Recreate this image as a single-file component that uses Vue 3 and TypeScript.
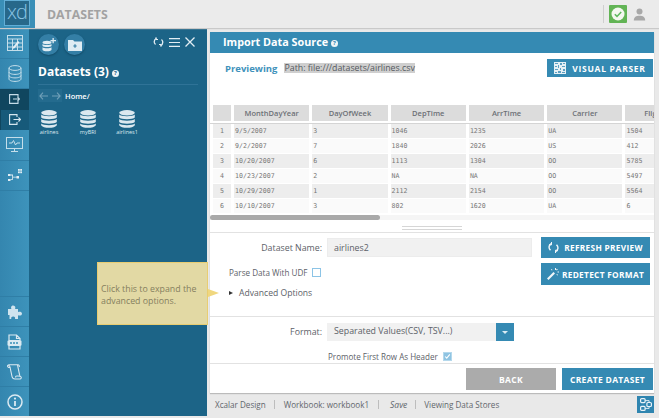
<script setup lang="ts">
const columns = ['MonthDayYear', 'DayOfWeek', 'DepTime', 'ArrTime', 'Carrier', 'FlightNum']
const rows = [
  ['9/5/2007', '3', '1046', '1235', 'UA', '1504'],
  ['9/2/2007', '7', '1840', '2026', 'US', '412'],
  ['10/20/2007', '6', '1113', '1304', 'OO', '5785'],
  ['10/23/2007', '2', 'NA', 'NA', 'OO', '5497'],
  ['10/29/2007', '1', '2112', '2154', 'OO', '5564'],
  ['10/10/2007', '3', '802', '1620', 'UA', '6'],
]
const datasets = ['airlines', 'myBRI', 'airlines1']
</script>

<template>
  <div class="app">
    <header class="topbar">
      <div class="logo"><span>xd</span></div>
      <div class="topbar-title">DATASETS</div>
      <div class="topbar-right">
        <span class="top-divider"></span>
        <span class="status">
          <svg width="14" height="14" viewBox="0 0 14 14">
            <circle cx="7" cy="7" r="6.5" fill="#f4f8f0" />
            <path d="M3.8 7.2l2.2 2.2 4.2-4.4" fill="none" stroke="#5cb85c" stroke-width="1.5" />
          </svg>
        </span>
        <svg class="user" width="13" height="13" viewBox="0 0 13 13">
          <circle cx="6.5" cy="3.6" r="3" fill="#a8a8a8" />
          <path d="M.8 12.5c0-3.6 2.4-4.8 5.7-4.8s5.7 1.2 5.7 4.8z" fill="#a8a8a8" />
        </svg>
      </div>
    </header>

    <div class="body">
      <nav class="sidebar">
        <div class="nav-item">
          <svg width="16" height="16" viewBox="0 0 16 16" fill="none" stroke="#c4deea" stroke-width="1">
            <rect x=".5" y=".5" width="15" height="15" />
            <path d="M.5 4h15M5.5 4v11.5M10.5 4v11.5M.5 8h15M.5 12h15" />
            <path d="M6 12l5-6 1.500 1.200-5 6-2 .6z" fill="#e3eff5" stroke="none" />
          </svg>
        </div>
        <div class="nav-item">
          <svg width="14" height="17" viewBox="0 0 14 17" fill="none" stroke="#c4deea" stroke-width="1">
            <ellipse cx="7" cy="3" rx="6" ry="2.400" />
            <path d="M1 3v11c0 1.400 2.700 2.400 6 2.400s6-1 6-2.400V3M1 7c0 1.400 2.700 2.400 6 2.400S13 8.400 13 7M1 10.500c0 1.400 2.700 2.400 6 2.400s6-1 6-2.400" />
          </svg>
        </div>
        <div class="sub-item sub-in">
          <svg width="11" height="10" viewBox="0 0 11 10" fill="none" stroke="#c4dbe7" stroke-width="1.100">
            <path d="M9 3V.6H.6v8.800H9V7M4 5h6.500M8.500 3l2 2-2 2" />
          </svg>
        </div>
        <div class="sub-item sub-out">
          <svg width="12" height="11" viewBox="0 0 12 11" fill="none" stroke="#d5e6ef" stroke-width="1.100">
            <path d="M8 3V.6H.6v9.800H8V8M4.500 5.500h7M9.500 3.500l2 2-2 2" />
          </svg>
        </div>
        <div class="nav-item">
          <svg width="17" height="16" viewBox="0 0 17 16" fill="none" stroke="#c4deea" stroke-width="1">
            <rect x=".5" y=".5" width="16" height="11" />
            <path d="M3 6h3l1.500-2.500L9.500 8 11 6h3M5 14.500h7M8.500 11.500v3" />
          </svg>
        </div>
        <div class="nav-item">
          <svg width="14" height="13" viewBox="0 0 14 13" fill="#e2eef4" stroke="none">
            <rect x="10" y="0" width="1.800" height="1.800" />
            <rect x="12.200" y="0" width="1.800" height="1.800" />
            <rect x="10" y="2.400" width="1.800" height="1.800" />
            <rect x="12.200" y="2.400" width="1.800" height="1.800" />
            <rect x="0" y="5" width="2.500" height="2" />
            <rect x="0" y="10" width="2.500" height="2" />
            <path d="M2.500 5.600h2.500v5.200H2.500v-.800h1.700V6.400H2.500zM5 7.800h4.500v.800H5z" />
            <rect x="8.500" y="7" width="2.500" height="2.500" />
          </svg>
        </div>
        <div class="nav-spacer"></div>
        <div class="nav-item nav-bottom">
          <svg width="16" height="16" viewBox="0 0 16 16" fill="#cfe3ee">
            <path d="M1 5h3.500c-.800-1.200-.500-3.500 1.700-3.500S8.800 3.800 8 5h3v3.200c1.200-.800 4-.500 4 1.500s-2.800 2.300-4 1.500V15H8c.500-1.200-.200-2.500-1.800-2.500S3.800 13.800 4.300 15H2.500V11H1z" />
          </svg>
        </div>
        <div class="nav-item nav-bottom">
          <svg width="15" height="16" viewBox="0 0 15 16" fill="none" stroke="#dbe9f1" stroke-width="1.200">
            <path d="M2 6V1h7.500L13 4.500V6M2 12v3h11v-3M9.500 1v3.500H13" />
            <rect x=".5" y="6" width="14" height="6" rx="1.500" fill="#dbe9f1" stroke="none" />
            <path d="M3 9h9" stroke="#3a8fb7" stroke-width="1.500" stroke-dasharray="2 1" />
          </svg>
        </div>
        <div class="nav-item nav-bottom">
          <svg width="15" height="16" viewBox="0 0 15 16" fill="none" stroke="#dbe9f1" stroke-width="1.100">
            <path d="M3 3C2.500 1.500 1.500.7.700 1.500.2 2.200 1 3.500 3 3.500" />
            <path d="M1.500.8H11c1 0 1.500 1.200 1.300 2.200" />
            <path d="M3 3l2 9.500c.3 1.500 1.500 2.500 3 2.500h5c1.300 0 1.500-1.500 1-2.200-.5-.8-2-1-4.500-.8-.7 0-1 .5-.7 1.500" />
            <path d="M10.500 1l2.300 10.800" />
          </svg>
        </div>
        <div class="nav-item nav-bottom">
          <svg width="16" height="16" viewBox="0 0 16 16" fill="none" stroke="#dbe9f1" stroke-width="1.500">
            <circle cx="8" cy="8" r="7" />
            <path d="M8 7v5" stroke-width="1.800" />
            <circle cx="8" cy="4.600" r="1.100" fill="#dbe9f1" stroke="none" />
          </svg>
        </div>
      </nav>

      <aside class="panel">
        <div class="panel-top">
          <button class="round-btn" type="button">
            <svg width="14" height="14" viewBox="0 0 14 14" fill="#dfecf3">
              <path d="M10.500 0h1.300v2H14v1.300h-2.200v2h-1.300v-2H8.500V2h2z" />
              <ellipse cx="5" cy="4.500" rx="4.500" ry="1.700" />
              <path d="M.5 6c1 1.400 8 1.400 9 0v2c-1 1.400-8 1.400-9 0zM.5 9.300c1 1.400 8 1.400 9 0V12c-1 1.800-8 1.800-9 0z" />
            </svg>
          </button>
          <button class="round-btn" type="button">
            <svg width="14" height="12" viewBox="0 0 14 12">
              <path d="M0 1h5l1.500 1.500H14V12H0z" fill="#dfecf3" />
              <path d="M5.300 7h3.400M7 5.300v3.400" stroke="#357fa6" stroke-width="1.200" />
            </svg>
          </button>
          <div class="panel-tools">
            <svg width="11" height="10" viewBox="0 0 11 10" fill="none" stroke="#e3eef4" stroke-width="1.300">
              <path d="M3.500 1.200C1.800 2.200.800 3.800 1.500 6l1 1.500M7.500 8.800C9.200 7.800 10.200 6.200 9.500 4l-1-1.500" />
              <path d="M3 .200v2.300h2M8 9.800V7.500H6" stroke-width="1" />
            </svg>
            <svg width="11" height="9" viewBox="0 0 11 9" stroke="#e3eef4" stroke-width="1.100">
              <path d="M0 .600h11M0 4.500h11M0 8.400h11" />
            </svg>
            <svg width="10" height="10" viewBox="0 0 10 10" stroke="#e3eef4" stroke-width="1.300">
              <path d="M.500.500l9 9M9.500.500l-9 9" />
            </svg>
          </div>
        </div>
        <h2 class="panel-title">Datasets (3) <span class="help">?</span></h2>
        <div class="panel-rule"></div>
        <div class="crumbs">
          <div class="arrows">
            <svg width="9" height="8" viewBox="0 0 9 8" fill="none" stroke="#6f9fb8" stroke-width="1.100"><path d="M9 4H1M4 .700L.900 4 4 7.300" /></svg>
            <svg width="9" height="8" viewBox="0 0 9 8" fill="none" stroke="#6f9fb8" stroke-width="1.100"><path d="M0 4h8M5 .700L8.100 4 5 7.300" /></svg>
          </div>
          <span class="home">Home/</span>
        </div>
        <div class="grid-files">
          <div v-for="name in datasets" :key="name" class="file">
            <svg width="16" height="18" viewBox="0 0 16 18" fill="#dbe8ef">
              <ellipse cx="8" cy="2.800" rx="7.800" ry="2.700" />
              <path d="M.2 4.500c1.500 2.200 14.100 2.200 15.600 0v3c-1.500 2.200-14.100 2.200-15.600 0zM.2 9c1.500 2.200 14.100 2.200 15.600 0v3c-1.500 2.200-14.100 2.200-15.600 0zM.2 13.500c1.500 2.200 14.100 2.200 15.600 0v1.800c-1.500 3.400-14.100 3.400-15.600 0z" />
            </svg>
            <span>{{ name }}</span>
          </div>
        </div>
      </aside>

      <main class="main">
        <section class="card">
          <div class="card-head">Import Data Source <span class="help help-sm">?</span></div>
          <div class="preview-row">
            <span class="previewing">Previewing</span>
            <span class="path">Path: file:///datasets/airlines.csv</span>
            <button class="btn btn-parser" type="button">
              <svg width="12" height="12" viewBox="0 0 12 12">
                <rect width="12" height="12" fill="#e6f0f5" />
                <path d="M1 1h3v1H1zM6 1h2v2H6zM9 1h2v1H9zM1 4h2v1H1zM4 3h1v3H4zM8 4h3v1H8zM1 7h3v1H1zM6 6h1v2H6zM9 7h2v2H9zM1 10h2v1H1zM4 9h3v2H4zM8 10h3v1H8z" fill="#5c9fc2" />
              </svg>
              VISUAL PARSER
            </button>
          </div>

          <div class="table-wrap">
            <div class="table-row table-head">
              <div class="cell idx"></div>
              <div v-for="col in columns" :key="col" class="cell">{{ col }}</div>
            </div>
            <div class="head-rule"></div>
            <div v-for="(row, i) in rows" :key="i" class="table-row data-row" :class="{ odd: i % 2 === 0 }">
              <div class="cell idx">{{ i + 1 }}</div>
              <div v-for="(v, j) in row" :key="j" class="cell">{{ v }}</div>
            </div>
          </div>
          <div class="scroll"><div class="thumb"></div></div>
          <div class="grip"></div>

          <div class="form-top">
            <div class="form-left">
              <div class="field">
                <label class="label">Dataset Name:</label>
                <div class="input">airlines2</div>
              </div>
              <div class="udf">
                <span>Parse Data With UDF</span>
                <span class="check"></span>
              </div>
              <div class="advanced"><span class="caret"></span>Advanced Options</div>
            </div>
            <div class="form-btns">
              <button class="btn btn-side" type="button">
                <svg width="11" height="11" viewBox="0 0 11 11" fill="none" stroke="#f0f6f9" stroke-width="1.400">
                  <path d="M3.500 1.500C1.500 2.500.500 4.500 1.500 7l1 1.300M7.500 9.500C9.500 8.500 10.500 6.500 9.500 4l-1-1.300" />
                  <path d="M3.500 0v2.800H1M7.500 11V8.200H10" stroke-width="1" />
                </svg>
                REFRESH PREVIEW
              </button>
              <button class="btn btn-side btn-side-tall" type="button">
                <svg width="12" height="12" viewBox="0 0 12 12" fill="#f0f6f9">
                  <path d="M0 10.500L6.500 4 8 5.500 1.500 12z" />
                  <path d="M8 0h1v2H8zM10.500 3.500h1.500v1h-1.500zM4.500 1l1 1-.600.600-1-1zM10 .800l.800.800-1 1-.800-.800zM10 6l1 1-.600.600-1-1z" />
                </svg>
                REDETECT FORMAT
              </button>
            </div>
          </div>

          <div class="form-bottom">
            <div class="field">
              <label class="label">Format:</label>
              <div class="select">Separated Values(CSV, TSV...)</div>
              <span class="select-arrow"><i></i></span>
            </div>
            <div class="promote">
              <span>Promote First Row As Header</span>
              <span class="check checked">
                <svg width="9" height="9" viewBox="0 0 9 9" fill="none" stroke="#fff" stroke-width="1.400"><path d="M1.500 4.500l2 2.200 4-5" /></svg>
              </span>
            </div>
          </div>

          <div class="actions">
            <button class="btn btn-back" type="button">BACK</button>
            <button class="btn btn-create" type="button">CREATE DATASET</button>
          </div>
        </section>

        <footer class="footer">
          <span>Xcalar Design</span>
          <span class="sep"></span>
          <span>Workbook: workbook1</span>
          <span class="sep"></span>
          <em>Save</em>
          <span class="sep"></span>
          <span>Viewing Data Stores</span>
          <span class="foot-icon">
            <svg width="12" height="13" viewBox="0 0 12 13" fill="none" stroke="#eaf3f8" stroke-width="1.200">
              <rect x=".6" y=".6" width="4.500" height="4" rx="1" />
              <rect x=".6" y="8.400" width="4.500" height="4" rx="1" />
              <rect x="6.900" y="4.500" width="4.500" height="4" rx="1" />
              <path d="M5.100 2.600h4v1.900M5.100 10.400h4V8.500" stroke-width=".9" />
            </svg>
          </span>
        </footer>
      </main>
    </div>

    <div class="tip">
      Click this to expand the advanced options.
      <span class="tip-arrow"></span>
    </div>
  </div>
</template>

<style scoped>
.app {
  position: relative;
  width: 659px;
  height: 418px;
  display: flex;
  flex-direction: column;
  overflow: hidden;
  background: #e9e9e9;
  font-family: "Open Sans", "Liberation Sans", sans-serif;
  color: #5c6168;
  padding-bottom: 2px;
  box-sizing: border-box;
}

.topbar {
  height: 28px;
  flex: none;
  display: flex;
  align-items: center;
  background: #ebebeb;
  box-shadow: 0 1px 1px #c9c9c9;
  position: relative;
  z-index: 2;
}

.logo {
  width: 35px;
  height: 28px;
  box-sizing: border-box;
  padding: 0 5px 2px 4px;
  background: #3a8fb7;
}

.logo span {
  display: block;
  height: 100%;
  box-sizing: border-box;
  border: 1px solid #62aed6;
  background: #27688a;
  color: #8cc6e6;
  font: 300 20px/22px "Open Sans", sans-serif;
  text-align: center;
  letter-spacing: -1px;
}

.topbar-title {
  margin-left: 12px;
  font-size: 12.300px;
  font-weight: 700;
  color: #a2a2a2;
}

.topbar-right {
  margin-left: auto;
  display: flex;
  align-items: center;
  padding-right: 13px;
}

.top-divider {
  width: 1px;
  height: 18px;
  background: #cfcfcf;
  margin-right: 5px;
}

.status {
  width: 18px;
  height: 18px;
  border-radius: 1px;
  background: #62b455;
  display: flex;
  align-items: center;
  justify-content: center;
  margin-right: 6px;
}

.body {
  flex: 1;
  min-height: 0;
  display: flex;
}

.sidebar {
  width: 29px;
  flex: none;
  display: flex;
  flex-direction: column;
  background: linear-gradient(90deg, #3486af, #3d93bb);
}

.nav-item {
  height: 30.500px;
  flex: none;
  display: flex;
  align-items: center;
  justify-content: center;
  border-bottom: 1px solid #2f7ea6;
  box-sizing: border-box;
}

.nav-bottom {
  height: 30px;
  border-bottom: none;
  border-top: 1px solid #2f7ea6;
}

.sub-item {
  height: 20.500px;
  flex: none;
  display: flex;
  align-items: center;
  justify-content: center;
}

.sub-in {
  background: #10465f;
}

.sub-out {
  background: #175a7a;
  border-left: 1px solid #10465f;
  box-sizing: border-box;
}

.nav-spacer {
  flex: 1;
}

.panel {
  width: 178px;
  flex: none;
  box-sizing: border-box;
  padding: 6px 9px 0;
  background: #1c6487;
  color: #fff;
}

.panel-top {
  display: flex;
  gap: 5px;
  align-items: flex-start;
}

.round-btn {
  width: 21px;
  height: 21px;
  padding: 0;
  border: none;
  border-radius: 50%;
  display: flex;
  align-items: center;
  justify-content: center;
  background: #347fa6;
  box-shadow: 0 1px 2px #124a66;
}

.panel-tools {
  margin-left: auto;
  display: flex;
  align-items: center;
  gap: 5px;
  padding: 3px 3px 0 0;
}

.panel-title {
  margin: 9px 0 0;
  font-size: 12px;
  line-height: 16px;
  font-weight: 700;
}

.help {
  display: inline-block;
  width: 7px;
  height: 7px;
  border-radius: 50%;
  background: #eef4f7;
  color: #1c6487;
  font-size: 6px;
  line-height: 7px;
  font-weight: 700;
  text-align: center;
  vertical-align: 1px;
}

.panel-rule {
  height: 1px;
  margin: 4px 0 0;
  background: #2f7397;
  width: 160px;
}

.crumbs {
  display: flex;
  align-items: center;
  gap: 3px;
  margin-top: 4px;
}

.arrows {
  width: 24px;
  height: 13px;
  display: flex;
  align-items: center;
  justify-content: center;
  gap: 4px;
  background: #246b8e;
}

.home {
  font-size: 7.500px;
  font-weight: 600;
}

.grid-files {
  display: flex;
  gap: 19px;
  margin: 8px 0 0 1px;
}

.file {
  width: 20px;
  display: flex;
  flex-direction: column;
  align-items: center;
  font-size: 5.500px;
  color: #dbe8ef;
  line-height: 8px;
}

.main {
  flex: 1;
  min-width: 0;
  display: flex;
  flex-direction: column;
  padding: 4px 5px 0 3px;
}

.card {
  flex: none;
  height: 361px;
  background: #fff;
  display: flex;
  flex-direction: column;
  overflow: hidden;
  box-shadow: 0 1px 1px #bbb;
}

.card-head {
  height: 21px;
  flex: none;
  padding-left: 13px;
  background: #358ab3;
  color: #fff;
  font-size: 10.800px;
  line-height: 20px;
  font-weight: 700;
}

.help-sm {
  color: #358ab3;
}

.preview-row {
  height: 30px;
  flex: none;
  display: flex;
  align-items: center;
  padding: 0 1px 0 15px;
  box-sizing: border-box;
}

.previewing {
  font-size: 9.500px;
  font-weight: 700;
  color: #3f92bb;
  margin-right: 7px;
}

.path {
  font-size: 8.800px;
  line-height: 10px;
  font-weight: 400;
  background: #cfcfcf;
  color: #555a60;
}

.btn {
  border: none;
  padding: 0;
  display: flex;
  align-items: center;
  justify-content: center;
  font-family: "Open Sans", sans-serif;
  font-weight: 700;
  color: #fff;
  background: #358ab3;
}

.btn-parser {
  margin-left: auto;
  width: 106px;
  height: 18px;
  gap: 6px;
  font-size: 8.500px;
  letter-spacing: .7px;
}

.table-wrap {
  margin: 22px 0 0 3px;
  flex: none;
}

.table-row {
  display: grid;
  grid-template-columns: 18px repeat(6, 75.300px);
  column-gap: 3px;
}

.table-head {
  height: 16px;
}

.table-head .cell {
  background: #dcdcdc;
  font-size: 7.500px;
  line-height: 16px;
  font-weight: 600;
  text-align: center;
  color: #6c7076;
  overflow: hidden;
  white-space: nowrap;
}

.head-rule {
  height: 1px;
  margin: 2px 0 0 -3px;
  width: 447px;
  background: #d4d4d4;
}

.data-row {
  height: 15px;
}

.data-row .cell {
  background: #fafafa;
  padding-left: 1px;
  margin-bottom: 1px;
  font: 6.600px/14px "DejaVu Sans Mono", monospace;
  color: #777;
  white-space: nowrap;
  overflow: hidden;
}

.data-row.odd .cell {
  background: #ededed;
}

.data-row .idx {
  padding-left: 0;
  text-align: center;
}

.scroll {
  height: 5px;
  margin-top: 1px;
  flex: none;
  background: #f5f5f5;
}

.thumb {
  width: 170px;
  height: 5px;
  border-radius: 3px;
  background: #a9a9a9;
}

.grip {
  width: 60px;
  height: 2px;
  margin: 6px auto 0;
  border-top: 1px solid #d6d6d6;
  border-bottom: 1px solid #d6d6d6;
  flex: none;
}

.form-top {
  height: 85px;
  flex: none;
  box-sizing: border-box;
  margin-top: 2px;
  border-top: 1px solid #e2e2e2;
  border-bottom: 1px solid #e2e2e2;
  display: flex;
  justify-content: space-between;
  padding: 4px 4px 0 0;
}

.form-left {
  padding-top: 1px;
}

.field {
  display: flex;
  align-items: center;
}

.label {
  width: 112px;
  text-align: right;
  margin-right: 5px;
  font-size: 8.800px;
  font-weight: 500;
}

.input {
  width: 205px;
  height: 19px;
  box-sizing: border-box;
  padding-left: 6px;
  font-size: 8.800px;
  font-weight: 500;
  line-height: 18px;
  background: #f1f1f1;
  border: 1px solid #ececec;
}

.udf {
  display: flex;
  align-items: center;
  gap: 5px;
  margin: 10px 0 0 19px;
  font-size: 8.100px;
  font-weight: 500;
  height: 10px;
}

.check {
  width: 9px;
  height: 9px;
  display: flex;
  align-items: center;
  justify-content: center;
  box-sizing: border-box;
  border: 1px solid #8cc4e6;
  background: #fff;
}

.check.checked {
  background: #8fc4e2;
  border-color: #b4d8ec;
}

.advanced {
  display: flex;
  align-items: center;
  margin: 10px 0 0 19px;
  font-size: 8.600px;
  font-weight: 500;
  height: 11px;
}

.caret {
  width: 0;
  height: 0;
  margin-right: 6px;
  border-left: 4px solid #333;
  border-top: 2.500px solid transparent;
  border-bottom: 2.500px solid transparent;
}

.form-btns {
  display: flex;
  flex-direction: column;
  gap: 5px;
}

.btn-side {
  width: 109px;
  height: 21px;
  gap: 5px;
  font-size: 8.300px;
  letter-spacing: .3px;
}

.btn-side-tall {
  height: 22px;
  gap: 3px;
}

.form-bottom {
  height: 47px;
  flex: none;
  box-sizing: border-box;
  border-bottom: 1px solid #e2e2e2;
  padding-top: 6px;
}

.select {
  width: 169px;
  height: 18px;
  box-sizing: border-box;
  padding-left: 7px;
  font-size: 8.800px;
  font-weight: 500;
  line-height: 17px;
  background: #f1f1f1;
}

.select-arrow {
  width: 18px;
  height: 18px;
  display: flex;
  align-items: center;
  justify-content: center;
  background: #358ab3;
}

.select-arrow i {
  border-top: 3px solid #dcecf4;
  border-left: 3px solid transparent;
  border-right: 3px solid transparent;
}

.promote {
  display: flex;
  align-items: center;
  gap: 5px;
  margin: 10px 0 0 118px;
  font-size: 8.050px;
  font-weight: 500;
  height: 10px;
}

.actions {
  display: flex;
  justify-content: flex-end;
  gap: 6px;
  padding: 4px 1px 0 0;
}

.btn-back,
.btn-create {
  height: 22px;
  font-size: 8.500px;
  letter-spacing: .3px;
}

.btn-back {
  width: 90px;
  background: #ababab;
}

.btn-create {
  width: 91px;
}

.footer {
  flex: 1;
  display: flex;
  align-items: center;
  gap: 8.500px;
  padding-left: 5px;
  font-size: 8.100px;
  font-weight: 500;
  color: #62666c;
}

.footer em {
  margin: 0 -1px 0 3px;
  font-size: 8.500px;
  font-weight: 400;
}

.sep {
  width: 1px;
  height: 9px;
  background: #bdbdbd;
}

.foot-icon {
  margin-left: auto;
  width: 17px;
  height: 17px;
  display: flex;
  align-items: center;
  justify-content: center;
  background: #2f85b0;
}

.tip {
  position: absolute;
  left: 97px;
  top: 262px;
  width: 111px;
  height: 63px;
  box-sizing: border-box;
  padding: 20px 3px 0 3px;
  background: #e2d9a4;
  border: 1px solid #e8cd72;
  color: #857f5f;
  font-size: 8.800px;
  line-height: 12px;
  z-index: 3;
}

.tip-arrow {
  position: absolute;
  right: -12px;
  top: 26px;
  width: 0;
  height: 0;
  border-left: 11px solid #f0d77f;
  border-top: 4.500px solid transparent;
  border-bottom: 4.500px solid transparent;
}
</style>
